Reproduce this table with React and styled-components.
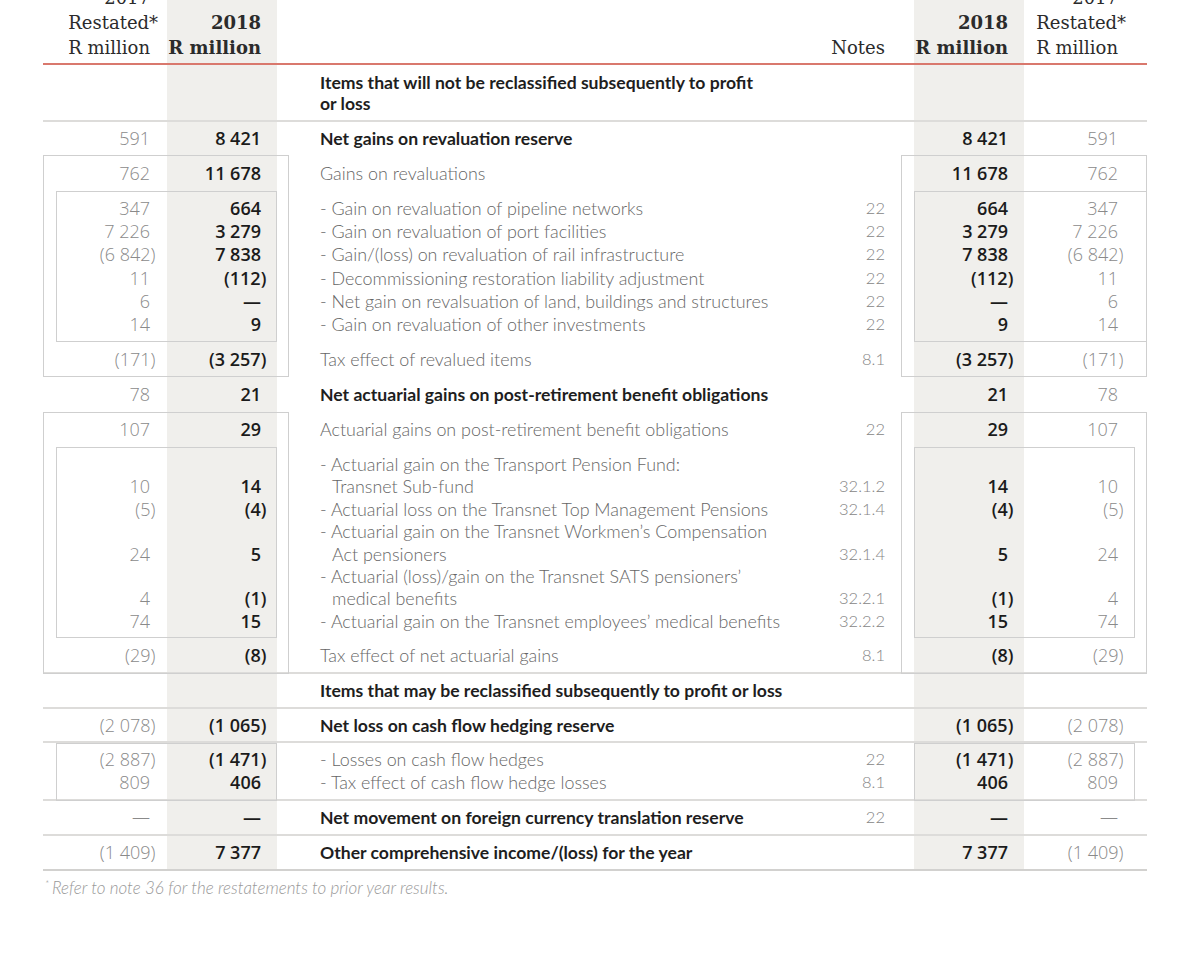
import React from "react";
import styled, { createGlobalStyle } from "styled-components";

const COLS = "124px 110px 12px 1fr 81px 13px 110px 123px";
const ROWS = "81px 57px 33px 36px 151px 35px 35px 35px 191px 36px 35px 34px 58px 35px 35px";
const SHADE = "#f0efec";
const RULE = "#dddcda";
const FRAME = "#cfcfcf";

const GlobalStyle = createGlobalStyle`
  html, body { margin: 0; padding: 0; background: #ffffff; }
  body { overflow: hidden; }
`;

const Page = styled.div`
  margin-top: -16px;
  padding-left: 43px;
`;

const Table = styled.div`
  width: 1104px;
  display: grid;
  grid-template-columns: ${COLS};
  grid-template-rows: ${ROWS};
`;

const Row = styled.div`
  grid-column: 1 / -1;
  grid-row: ${(p) => p.$r};
  display: grid;
  grid-template-columns: ${COLS};
  box-sizing: border-box;
  border-bottom: ${(p) => (p.$rule ? `2px solid ${p.$rule}` : "none")};
`;

const Cell = styled.div`
  display: flex;
  flex-direction: column;
  justify-content: center;
  min-width: 0;
`;

const Gutter = styled.div``;

const Value = styled(Cell)`
  align-items: flex-end;
  padding-right: ${(p) => p.$pad}px;
  background: ${(p) => (p.$shade ? SHADE : "transparent")};
  font-family: "Open Sans", "DejaVu Sans", sans-serif;
  font-size: 18px;
  font-weight: ${(p) => (p.$strong ? 600 : 300)};
  color: ${(p) => (p.$strong ? "#1b1b1b" : "#8a8a8a")};
`;

const Desc = styled(Cell)`
  padding-left: 31px;
  font-family: Lato, "Open Sans", sans-serif;
  font-size: ${(p) => (p.$bold ? 17.6 : 17.9)}px;
  font-weight: ${(p) => (p.$bold ? 700 : 300)};
  color: ${(p) => (p.$bold ? "#1e1e1e" : "#666666")};
`;

const Note = styled(Cell)`
  align-items: flex-end;
  padding-right: 16px;
  font-family: Lato, "Open Sans", sans-serif;
  font-size: 16.5px;
  font-weight: 300;
  color: #858585;
`;

const Head = styled(Cell)`
  justify-content: flex-end;
  align-items: flex-end;
  padding-bottom: 3px;
  padding-right: ${(p) => p.$pad}px;
  background: ${(p) => (p.$shade ? SHADE : "transparent")};
  font-family: "DejaVu Serif", "Liberation Serif", serif;
  font-size: 18px;
  font-weight: ${(p) => (p.$strong ? 700 : 400)};
  color: #2b2b2b;
`;

const Ln = styled.div`
  height: ${(p) => p.$lh}px;
  line-height: ${(p) => p.$lh}px;
  white-space: nowrap;
  padding-left: ${(p) => (p.$indent ? 12 : 0)}px;
`;

const Hang = styled.span`
  margin-right: -0.3em;
`;

const Star = styled.span`
  margin-right: -0.45em;
`;

const Frame = styled.div`
  grid-row: ${(p) => p.$rows};
  grid-column: ${(p) => p.$cols};
  margin: 0 ${(p) => p.$mr || 0}px 0 ${(p) => p.$ml || 0}px;
  border: 1px solid ${FRAME};
  pointer-events: none;
  z-index: 1;
`;

const Footnote = styled.p`
  margin: 2px 0 0 2px;
  font-family: Lato, "Open Sans", sans-serif;
  font-style: italic;
  font-weight: 300;
  font-size: 17px;
  line-height: 20px;
  color: #999999;

  sup {
    font-size: 10px;
    margin-right: 3px;
  }
`;

const fmt = (v) =>
  v && v.startsWith("(") ? (
    <>
      {v.slice(0, -1)}
      <Hang>)</Hang>
    </>
  ) : (
    v
  );

const rows = [
  {
    text: ["Items that will not be reclassified subsequently to profit", "or loss"],
    bold: true,
    rule: RULE,
  },
  { text: "Net gains on revaluation reserve", bold: true, a: "591", b: "8 421" },
  { text: "Gains on revaluations", a: "762", b: "11 678" },
  {
    lh: 23.2,
    items: [
      { desc: ["- Gain on revaluation of pipeline networks"], note: "22", a: "347", b: "664" },
      { desc: ["- Gain on revaluation of port facilities"], note: "22", a: "7 226", b: "3 279" },
      { desc: ["- Gain/(loss) on revaluation of rail infrastructure"], note: "22", a: "(6 842)", b: "7 838" },
      { desc: ["- Decommissioning restoration liability adjustment"], note: "22", a: "11", b: "(112)" },
      { desc: ["- Net gain on revalsuation of land, buildings and structures"], note: "22", a: "6", b: "—" },
      { desc: ["- Gain on revaluation of other investments"], note: "22", a: "14", b: "9" },
    ],
  },
  { text: "Tax effect of revalued items", note: "8.1", a: "(171)", b: "(3 257)" },
  { text: "Net actuarial gains on post-retirement benefit obligations", bold: true, a: "78", b: "21" },
  { text: "Actuarial gains on post-retirement benefit obligations", note: "22", a: "107", b: "29" },
  {
    lh: 22.4,
    items: [
      { desc: ["- Actuarial gain on the Transport Pension Fund:", "Transnet Sub-fund"], note: "32.1.2", a: "10", b: "14" },
      { desc: ["- Actuarial loss on the Transnet Top Management Pensions"], note: "32.1.4", a: "(5)", b: "(4)" },
      { desc: ["- Actuarial gain on the Transnet Workmen’s Compensation", "Act pensioners"], note: "32.1.4", a: "24", b: "5" },
      { desc: ["- Actuarial (loss)/gain on the Transnet SATS pensioners’", "medical benefits"], note: "32.2.1", a: "4", b: "(1)" },
      { desc: ["- Actuarial gain on the Transnet employees’ medical benefits"], note: "32.2.2", a: "74", b: "15" },
    ],
  },
  { text: "Tax effect of net actuarial gains", note: "8.1", a: "(29)", b: "(8)", rule: RULE },
  { text: "Items that may be reclassified subsequently to profit or loss", bold: true, rule: RULE },
  { text: "Net loss on cash flow hedging reserve", bold: true, a: "(2 078)", b: "(1 065)", rule: RULE },
  {
    lh: 23,
    rule: RULE,
    items: [
      { desc: ["- Losses on cash flow hedges"], note: "22", a: "(2 887)", b: "(1 471)" },
      { desc: ["- Tax effect of cash flow hedge losses"], note: "8.1", a: "809", b: "406" },
    ],
  },
  { text: "Net movement on foreign currency translation reserve", bold: true, note: "22", a: "—", b: "—", rule: RULE },
  { text: "Other comprehensive income/(loss) for the year", bold: true, a: "(1 409)", b: "7 377", rule: "#d2d1cf" },
];

const frames = [
  { rows: "4 / 7", cols: "1 / 4" },
  { rows: "5 / 6", cols: "1 / 3", ml: 13 },
  { rows: "4 / 7", cols: "6 / 9" },
  { rows: "5 / 6", cols: "7 / 9" },
  { rows: "8 / 11", cols: "1 / 4" },
  { rows: "9 / 10", cols: "1 / 3", ml: 13 },
  { rows: "8 / 11", cols: "6 / 9" },
  { rows: "9 / 10", cols: "7 / 9", mr: 12 },
  { rows: "13 / 14", cols: "1 / 3", ml: 13 },
  { rows: "13 / 14", cols: "7 / 9", mr: 12 },
];

const HeaderRow = () => (
  <Row $r={1} $rule="#d9786d">
    <Head $pad={17}>
      <Ln $lh={25}>2017</Ln>
      <Ln $lh={25}>
        Restated<Star>*</Star>
      </Ln>
      <Ln $lh={25}>R million</Ln>
    </Head>
    <Head $pad={16} $shade $strong>
      <Ln $lh={25}>2018</Ln>
      <Ln $lh={25}>R million</Ln>
    </Head>
    <Gutter />
    <Gutter />
    <Head $pad={16}>
      <Ln $lh={25}>Notes</Ln>
    </Head>
    <Gutter />
    <Head $pad={16} $shade $strong>
      <Ln $lh={25}>2018</Ln>
      <Ln $lh={25}>R million</Ln>
    </Head>
    <Head $pad={29}>
      <Ln $lh={25}>2017</Ln>
      <Ln $lh={25}>
        Restated<Star>*</Star>
      </Ln>
      <Ln $lh={25}>R million</Ln>
    </Head>
  </Row>
);

const TableRow = ({ row, r }) => {
  const items = row.items || [{ desc: [].concat(row.text), note: row.note, a: row.a, b: row.b }];
  const lh = row.lh || 21;
  const col = (key) =>
    items.flatMap((it) => [...Array(it.desc.length - 1).fill(""), it[key] || ""]);
  const lines = (key) =>
    col(key).map((v, i) => (
      <Ln key={i} $lh={lh}>
        {fmt(v)}
      </Ln>
    ));
  const desc = items.flatMap((it) => it.desc.map((t, i) => ({ t, cont: i > 0 })));

  return (
    <Row $r={r} $rule={row.rule}>
      <Value $pad={17}>{lines("a")}</Value>
      <Value $pad={16} $shade $strong>
        {lines("b")}
      </Value>
      <Gutter />
      <Desc $bold={row.bold}>
        {desc.map((d, i) => (
          <Ln key={i} $lh={lh} $indent={d.cont && !row.bold}>
            {d.t}
          </Ln>
        ))}
      </Desc>
      <Note>{lines("note")}</Note>
      <Gutter />
      <Value $pad={16} $shade $strong>
        {lines("b")}
      </Value>
      <Value $pad={29}>{lines("a")}</Value>
    </Row>
  );
};

export default function App() {
  return (
    <Page>
      <GlobalStyle />
      <Table>
        <HeaderRow />
        {rows.map((row, i) => (
          <TableRow key={i} row={row} r={i + 2} />
        ))}
        {frames.map((f, i) => (
          <Frame key={i} $rows={f.rows} $cols={f.cols} $ml={f.ml} $mr={f.mr} />
        ))}
      </Table>
      <Footnote>
        <sup>*</sup>Refer to note 36 for the restatements to prior year results.
      </Footnote>
    </Page>
  );
}
